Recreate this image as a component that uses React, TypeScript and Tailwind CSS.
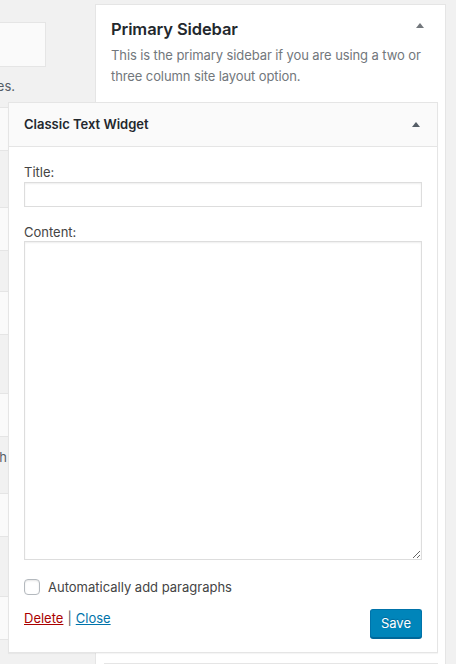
// Widgets screen: an expanded "Classic Text Widget" inside the Primary Sidebar
// panel. The open widget grows to the left over the available-widgets column,
// the way WordPress does it, via a negative margin.

import { useState } from "react";

function Caret({ className }: { className?: string }) {
  return (
    <svg width="8" height="5" viewBox="0 0 8 5" className={className}>
      <path d="M4 0 L8 5 L0 5 Z" fill="currentColor" />
    </svg>
  );
}

// a box from the available-widgets list; only its right-hand sliver shows
function ListBox() {
  return <div className="h-[44px] w-[46px] border-y border-r border-[#e5e5e5] bg-[#fafafa]" />;
}

function LeftColumn() {
  return (
    <div className="w-[95px] shrink-0 pt-[22px] text-[#555d66]">
      <div className="h-[45px] w-[46px] border-y border-r border-[#e5e5e5] bg-[#fafafa]" />
      <div className="flex h-[40px] w-[15px] items-center justify-end overflow-hidden whitespace-nowrap">
        choices.
      </div>
      <ListBox />
      <div className="h-[56px]" />
      <ListBox />
      <div className="h-[40px]" />
      <ListBox />
      <div className="h-[58px]" />
      <ListBox />
      <div className="h-[56px] pt-[11px]">
        <div className="flex w-[7px] justify-end overflow-hidden whitespace-nowrap leading-[18px]">with</div>
      </div>
      <ListBox />
      <div className="h-[59px]" />
      <ListBox />
    </div>
  );
}

export default function App() {
  const [title, setTitle] = useState("");
  const [content, setContent] = useState("");
  const [autoP, setAutoP] = useState(false);

  return (
    <div className="flex h-[664px] w-[456px] overflow-hidden bg-[#f1f1f1] font-['Inter','Liberation_Sans',sans-serif] text-[13px] text-[#444]">
      <LeftColumn />

      <div className="mt-[4px] min-h-[720px] w-[351px] shrink-0 self-start border border-[#e5e5e5] bg-white">
        <div className="flex items-start justify-between pl-[15px] pr-[21px] pt-[13px]">
          <h2 className="text-[16.5px] font-semibold leading-[22px] tracking-[-0.1px] text-[#23282d]">Primary Sidebar</h2>
          <Caret className="mt-[5px] text-[#72777c]" />
        </div>
        <p className="mt-[5px] whitespace-nowrap px-[15px] leading-[21px] tracking-[-0.1px] text-[#72777c]">
          This is the primary sidebar if you are using a two or
          <br />
          three column site layout option.
        </p>

        <div className="relative z-10 ml-[-88px] mt-[15px] w-[430px] border border-[#e5e5e5] bg-white shadow-[0_1px_1px_rgba(0,0,0,0.04)]">
          <div className="flex h-[44px] items-center justify-between border-b border-[#e5e5e5] bg-[#fafafa] pl-[15px] pr-[17px]">
            <h3 className="font-semibold text-[#23282d]">Classic Text Widget</h3>
            <Caret className="text-[#555d66]" />
          </div>

          <div className="px-[15px] pb-[14px] pt-[16px]">
            <label className="block leading-[18px]">Title:</label>
            <input
              value={title}
              onChange={(e) => setTitle(e.target.value)}
              className="mt-[1px] block h-[25px] w-full border border-[#ddd] bg-white px-[6px] shadow-[inset_0_1px_2px_rgba(0,0,0,0.07)] outline-none"
            />

            <label className="mt-[16px] block leading-[18px]">Content:</label>
            <textarea
              value={content}
              onChange={(e) => setContent(e.target.value)}
              className="block h-[319px] w-full border border-[#ddd] bg-white p-[6px] shadow-[inset_0_1px_2px_rgba(0,0,0,0.07)] outline-none"
            />

            <label className="mt-[19px] flex h-[16px] items-center">
              <input
                type="checkbox"
                checked={autoP}
                onChange={(e) => setAutoP(e.target.checked)}
                className="h-[16px] w-[16px] appearance-none rounded-[4px] border border-[#b4b9be] bg-white shadow-[inset_0_1px_2px_rgba(0,0,0,0.1)] checked:bg-[#0073aa]"
              />
              <span className="ml-[8px] leading-[18px]">Automatically add paragraphs</span>
            </label>

            <div className="mt-[14px] flex items-start justify-between">
              <div className="leading-[18px]">
                <a href="#" className="text-[#a00] underline">Delete</a>
                <span className="mx-[4px] text-[#555d66]">|</span>
                <a href="#" className="text-[#0073aa] underline">Close</a>
              </div>
              <button className="h-[29px] rounded-[3px] border border-[#0073aa] border-b-[#006799] bg-[#0085ba] px-[10px] text-white shadow-[0_1px_0_#006799] [text-shadow:0_-1px_1px_#006799]">
                Save
              </button>
            </div>
          </div>
        </div>

        <div className="ml-[8px] mt-[10px] h-[44px] w-[334px] border border-[#e5e5e5] bg-[#fafafa]" />
      </div>
    </div>
  );
}
